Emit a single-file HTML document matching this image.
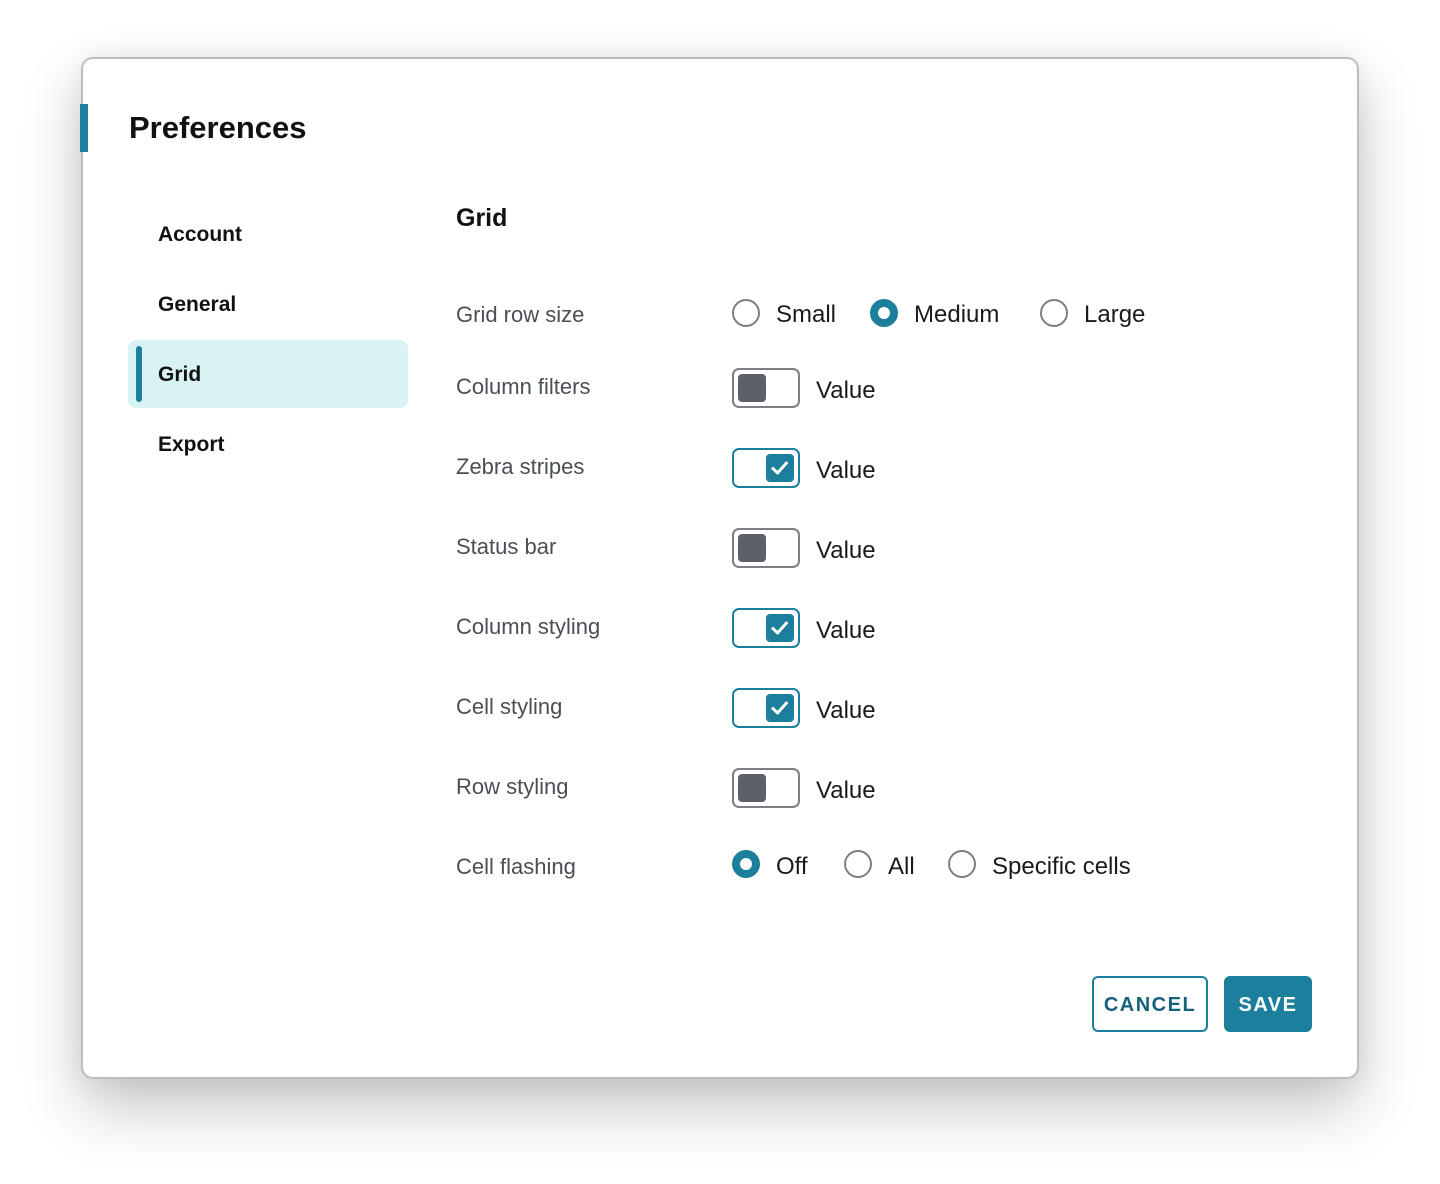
<!DOCTYPE html>
<html><head><meta charset="utf-8"><style>
*{box-sizing:border-box;margin:0;padding:0}
body{width:1440px;height:1184px;background:#fff;position:relative;font-family:"Liberation Sans",sans-serif;overflow:hidden}
.dlg{position:absolute;left:81px;top:57px;width:1278px;height:1022px;border:2px solid #bdbdbd;border-radius:12px;background:#fff;box-shadow:0 30px 60px rgba(0,0,0,0.22),0 0 30px rgba(0,0,0,0.08)}
.a{position:absolute;line-height:30px;white-space:nowrap}
.nav{font-size:21px;font-weight:bold;color:#111;left:158px}
.lbl{font-size:22px;color:#4a4f55;left:456px}
.val{font-size:24px;color:#1a1a1a}
.rad{position:absolute;width:28px;height:28px;border-radius:50%;border:2px solid #7b7f85;background:#fff}
.rad.on{border:8px solid #1c7f9c}
.tg{position:absolute;left:732px;width:68px;height:40px;border:2px solid #7b7f85;border-radius:7px;background:#fff}
.tg i{position:absolute;left:4px;top:4px;width:28px;height:28px;border-radius:4px;background:#5d6167}
.tg.on{border-color:#1c7f9c}
.tg.on i{left:32px;background:#1c7f9c}
</style></head><body>
<div class="dlg"></div>
<div style="position:absolute;left:80px;top:104px;width:8px;height:48px;background:#1c7f9c"></div>
<div class="a" style="left:129px;top:110px;font-size:31px;font-weight:bold;color:#111;line-height:36px">Preferences</div>

<div class="a nav" style="top:220px">Account</div>
<div class="a nav" style="top:290px">General</div>
<div style="position:absolute;left:128px;top:340px;width:280px;height:68px;background:#d9f3f4;border-radius:8px"></div>
<div style="position:absolute;left:136px;top:346px;width:6px;height:56px;background:#1c7f9c;border-radius:3px"></div>
<div class="a nav" style="top:360px">Grid</div>
<div class="a nav" style="top:430px">Export</div>

<div class="a" style="left:456px;top:203px;font-size:25px;font-weight:bold;color:#111">Grid</div>

<div class="a lbl" style="top:300px">Grid row size</div>
<div class="rad" style="left:732px;top:299px"></div><div class="a val" style="left:776px;top:300px">Small</div>
<div class="rad on" style="left:870px;top:299px"></div><div class="a val" style="left:914px;top:300px">Medium</div>
<div class="rad" style="left:1040px;top:299px"></div><div class="a val" style="left:1084px;top:300px">Large</div>

<div class="a lbl" style="top:372px">Column filters</div>
<div class="tg" style="top:368px"><i></i></div><div class="a val" style="left:816px;top:376px">Value</div>

<div class="a lbl" style="top:452px">Zebra stripes</div>
<div class="tg on" style="top:448px"><i><svg width="28" height="28" viewBox="0 0 28 28"><path d="M7 14.5l4.5 4.5 9-10" stroke="#fff" stroke-width="3" fill="none" stroke-linecap="round" stroke-linejoin="round"/></svg></i></div><div class="a val" style="left:816px;top:456px">Value</div>

<div class="a lbl" style="top:532px">Status bar</div>
<div class="tg" style="top:528px"><i></i></div><div class="a val" style="left:816px;top:536px">Value</div>

<div class="a lbl" style="top:612px">Column styling</div>
<div class="tg on" style="top:608px"><i><svg width="28" height="28" viewBox="0 0 28 28"><path d="M7 14.5l4.5 4.5 9-10" stroke="#fff" stroke-width="3" fill="none" stroke-linecap="round" stroke-linejoin="round"/></svg></i></div><div class="a val" style="left:816px;top:616px">Value</div>

<div class="a lbl" style="top:692px">Cell styling</div>
<div class="tg on" style="top:688px"><i><svg width="28" height="28" viewBox="0 0 28 28"><path d="M7 14.5l4.5 4.5 9-10" stroke="#fff" stroke-width="3" fill="none" stroke-linecap="round" stroke-linejoin="round"/></svg></i></div><div class="a val" style="left:816px;top:696px">Value</div>

<div class="a lbl" style="top:772px">Row styling</div>
<div class="tg" style="top:768px"><i></i></div><div class="a val" style="left:816px;top:776px">Value</div>

<div class="a lbl" style="top:852px">Cell flashing</div>
<div class="rad on" style="left:732px;top:850px"></div><div class="a val" style="left:776px;top:852px">Off</div>
<div class="rad" style="left:844px;top:850px"></div><div class="a val" style="left:888px;top:852px">All</div>
<div class="rad" style="left:948px;top:850px"></div><div class="a val" style="left:992px;top:852px">Specific cells</div>

<div style="position:absolute;left:1092px;top:976px;width:116px;height:56px;border:2px solid #1c7f9c;border-radius:6px;color:#16627a;font-weight:bold;font-size:20px;letter-spacing:1.5px;text-align:center;line-height:54px">CANCEL</div>
<div style="position:absolute;left:1224px;top:976px;width:88px;height:56px;background:#1c7f9c;border-radius:6px;color:#fff;font-weight:bold;font-size:20px;letter-spacing:1.5px;text-align:center;line-height:58px">SAVE</div>
</body></html>
